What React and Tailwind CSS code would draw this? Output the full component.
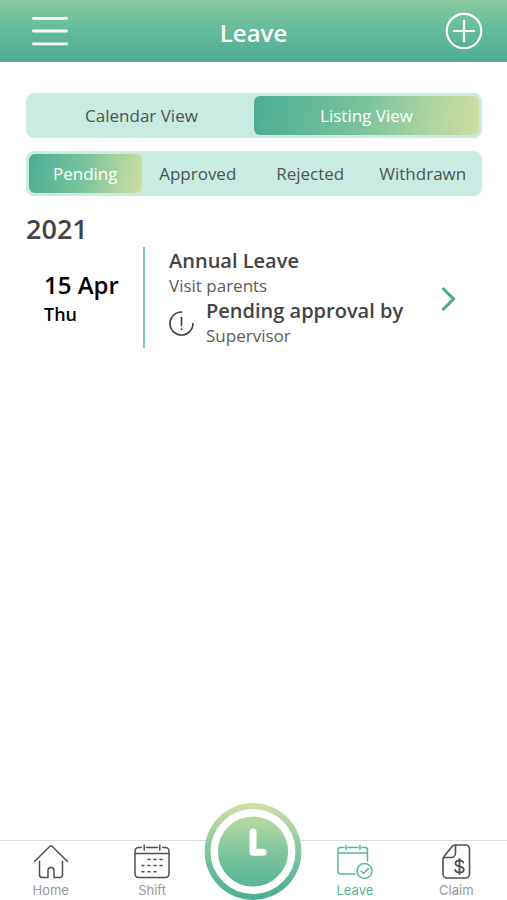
import React, { useState } from "react";

const SELECTED = "bg-linear-100 from-[#4aad94] via-[#7cc49d] to-[#d0dfa2] text-white";

function Segments({ label, items, initial, columns }) {
  const [selected, setSelected] = useState(initial);
  return (
    <div
      role="group"
      aria-label={label}
      className={`grid h-[45px] rounded-lg bg-[#c9ebe2] p-[3px] text-[17px] text-[#4b5553] ${columns}`}
    >
      {items.map((item) => (
        <button
          key={item}
          type="button"
          aria-pressed={item === selected}
          onClick={() => setSelected(item)}
          className={`rounded-md text-center whitespace-nowrap ${item === selected ? SELECTED : ""}`}
        >
          {item}
        </button>
      ))}
    </div>
  );
}

function HomeIcon() {
  return (
    <svg className="h-9 w-9" viewBox="0 0 36 36" fill="none" stroke="currentColor" strokeWidth="1.5" strokeLinecap="round" strokeLinejoin="round" aria-hidden="true">
      <path d="M1.5 17.5 16.4 2.7a2.3 2.3 0 0 1 3.2 0L34.5 17.5" />
      <path d="M6.5 17.5v13.2a2.8 2.8 0 0 0 2.8 2.8H15V26.5a3 3 0 0 1 6 0v7h5.7a2.8 2.8 0 0 0 2.8-2.8V17.5" />
    </svg>
  );
}

function ShiftIcon() {
  return (
    <svg className="h-9 w-9" viewBox="0 0 36 36" fill="none" stroke="currentColor" strokeWidth="1.5" strokeLinecap="round" strokeLinejoin="round" aria-hidden="true">
      <path d="M7.5 3.5H4.5A3.5 3.5 0 0 0 1 7V30a3.5 3.5 0 0 0 3.5 3.5h27A3.5 3.5 0 0 0 35 30V7a3.5 3.5 0 0 0-3.5-3.5H28.5M12.5 3.5h11M10.2 1.2v4.8M25.8 1.2v4.8M1 9.5h34" />
      <path d="M14 15.5h2M20 15.5h2M26 15.5h2M8 21.5h2M14 21.5h2M20 21.5h2M26 21.5h2M8 27.8h2M14 27.8h2M20 27.8h2" />
    </svg>
  );
}

function LeaveIcon() {
  return (
    <svg className="h-9 w-9" viewBox="0 0 36 36" fill="none" stroke="currentColor" strokeWidth="1.5" strokeLinecap="round" strokeLinejoin="round" aria-hidden="true">
      <path d="M7 3.5H3.5A2.5 2.5 0 0 0 1 6v21.500A2.500 2.500 0 0 0 3.500 30H18M30.500 17V6A2.500 2.500 0 0 0 28 3.500H25M11 3.500h10M9 1.500v4M23 1.500v4M1 9h29.500" />
      <circle cx="27.500" cy="27" r="7.500" />
      <path d="m24 27 2.500 2.500 5-5" />
    </svg>
  );
}

function ClaimIcon() {
  return (
    <svg className="h-9 w-9" viewBox="0 0 36 36" fill="none" stroke="currentColor" strokeWidth="1.6" strokeLinecap="round" strokeLinejoin="round" aria-hidden="true">
      <path d="M17 1h10.500a4 4 0 0 1 4 4v25a4 4 0 0 1-4 4H9a4 4 0 0 1-4-4V15a4 4 0 0 1 1-2.500L14.500 2.100A4 4 0 0 1 17 1Z" />
      <path d="M17.500 1.500V9a4.500 4.500 0 0 1-4.500 4.500H5.500" />
      <path strokeWidth="1.8" d="M25.300 18.500c-.600-1.400-2-2-3.800-2-2.300 0-4 1.100-4 2.900 0 4 8.300 1.900 8.300 6 0 1.900-1.800 3.100-4.200 3.100-2.200 0-3.900-.900-4.400-2.600M21.500 15v15" />
    </svg>
  );
}

function Tab({ icon, label, active }) {
  return (
    <a
      href={`#${label.toLowerCase()}`}
      aria-current={active ? "page" : undefined}
      className="flex flex-col items-center pt-[3px]"
    >
      <span className={active ? "text-[#55b896]" : "text-[#4f4f4f]"}>{icon}</span>
      <span className={`font-[Inter,sans-serif] text-[13px] leading-[20px] ${active ? "text-[#55b896]" : "text-[#989898]"}`}>
        {label}
      </span>
    </a>
  );
}

function ClockIcon() {
  return (
    <svg className="h-[97px] w-[97px]" viewBox="0 0 97 97" aria-hidden="true">
      <defs>
        <linearGradient id="clockFill" x1="0" y1="0" x2="0" y2="1">
          <stop offset="0" stopColor="#d3e0a3" />
          <stop offset="0.5" stopColor="#80c69e" />
          <stop offset="1" stopColor="#48ae95" />
        </linearGradient>
      </defs>
      <circle cx="48.5" cy="48.5" r="48.5" fill="url(#clockFill)" />
      <circle cx="48.5" cy="48.5" r="38.8" fill="none" stroke="white" strokeWidth="7.4" />
      <path d="M48.5 29v20.3h10" fill="none" stroke="white" strokeWidth="7" strokeLinecap="round" strokeLinejoin="round" />
    </svg>
  );
}

export default function App() {
  return (
    <div className="flex min-h-screen flex-col bg-white font-['Open_Sans',sans-serif] text-[#444444]">
      <header className="grid h-[62px] grid-cols-[1fr_auto_1fr] items-center bg-linear-to-b from-[#88c99f] via-[#62bb9a] to-[#50aa92] px-6 text-white">
        <button type="button" aria-label="Open menu" className="justify-self-start px-2">
          <svg className="h-9 w-9" viewBox="0 0 36 36" fill="none" stroke="currentColor" strokeWidth="2.8" strokeLinecap="round" aria-hidden="true">
            <path d="M1.4 5.3h33.2M1.4 18h33.2M1.4 30.9h33.2" />
          </svg>
        </button>
        <h1 className="pt-1 text-[24px] leading-8 font-semibold">Leave</h1>
        <button type="button" aria-label="Add leave" className="justify-self-end">
          <svg className="h-[38px] w-[38px]" viewBox="0 0 38 38" fill="none" stroke="currentColor" strokeWidth="2.2" strokeLinecap="round" aria-hidden="true">
            <circle cx="19" cy="19" r="17.2" />
            <path d="M19 8.8v20.4M8.8 19h20.4" />
          </svg>
        </button>
      </header>

      <main className="flex-1 pt-[31px] pr-[25px] pl-[26px]">
        <div className="flex flex-col gap-[13px]">
          <Segments label="View" items={["Calendar View", "Listing View"]} initial="Listing View" columns="grid-cols-2" />
          <Segments label="Status" items={["Pending", "Approved", "Rejected", "Withdrawn"]} initial="Pending" columns="grid-cols-4" />
        </div>

        <h2 className="mt-4 text-[27px] leading-[34px] font-semibold">2021</h2>

        <a href="#annual-leave" className="flex items-center pt-px">
          <div className="w-[117px] pt-px pl-[18px] text-black">
            <p className="text-[24px] leading-[32px] font-semibold whitespace-nowrap">15 Apr</p>
            <p className="text-[18px] leading-[26px] font-semibold">Thu</p>
          </div>
          <div className="flex-1 border-l-2 border-[#7fcbb0] pt-px pl-6">
            <h3 className="text-[20px] leading-[26px] font-semibold">Annual Leave</h3>
            <p className="text-[17px] leading-[24px] text-[#5c5c5c]">Visit parents</p>
            <div className="flex items-center gap-3">
              <svg className="h-[25px] w-[25px] shrink-0" viewBox="0 0 25 25" fill="none" stroke="currentColor" strokeWidth="1.7" strokeLinecap="round" aria-hidden="true">
                <path d="M12.5 1A11.5 11.5 0 1 0 24 12.5M12.5 6.5v8" />
                <path strokeWidth="2" d="M12.5 18.2v.1" />
              </svg>
              <div>
                <p className="text-[20px] leading-[26px] font-semibold whitespace-nowrap">Pending approval by</p>
                <p className="text-[17px] leading-[24px] text-[#5c5c5c]">Supervisor</p>
              </div>
            </div>
          </div>
          <svg className="mr-[26px] h-[26px] w-4 shrink-0" viewBox="0 0 16 26" fill="none" stroke="#48aa8b" strokeWidth="3" aria-hidden="true">
            <path d="m2.5 3 11 11-11 11" />
          </svg>
        </a>
      </main>

      <nav aria-label="Main" className="grid h-[60px] grid-cols-5 border-t border-[#dcdcdc]">
        <Tab icon={<HomeIcon />} label="Home" />
        <Tab icon={<ShiftIcon />} label="Shift" />
        <div className="relative">
          <button type="button" aria-label="Clock in" className="absolute bottom-0 left-1/2 -translate-x-1/2 rounded-full">
            <ClockIcon />
          </button>
        </div>
        <Tab icon={<LeaveIcon />} label="Leave" active />
        <Tab icon={<ClaimIcon />} label="Claim" />
      </nav>
    </div>
  );
}
